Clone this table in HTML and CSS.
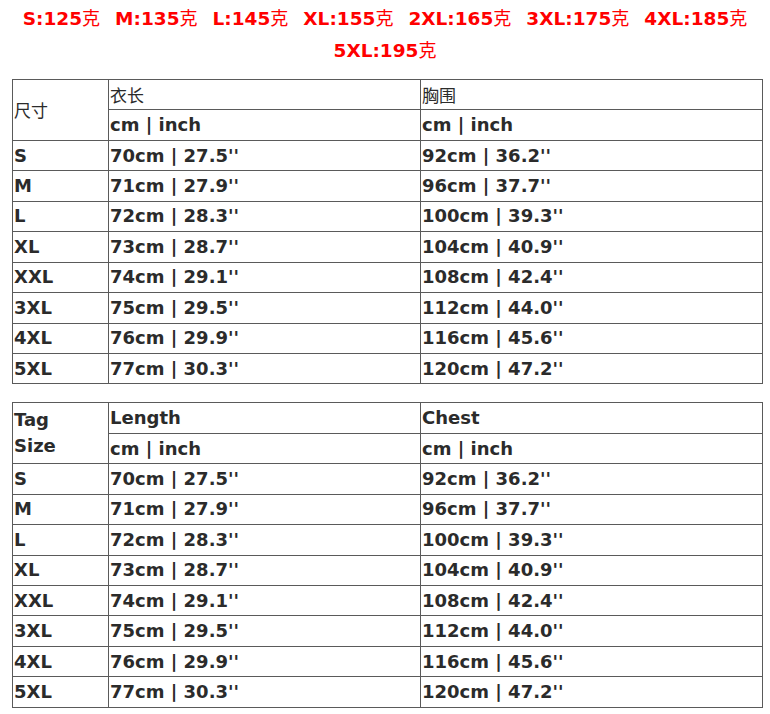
FILE: index.html
```html
<!DOCTYPE html>
<html>
<head>
<meta charset="utf-8">
<link rel="stylesheet" href="styles.css">
</head>
<body>
<div class="title">
  <span class="w">S:125<span class="cn">克</span></span>
  <span class="w">M:135<span class="cn">克</span></span>
  <span class="w">L:145<span class="cn">克</span></span>
  <span class="w">XL:155<span class="cn">克</span></span>
  <span class="w">2XL:165<span class="cn">克</span></span>
  <span class="w">3XL:175<span class="cn">克</span></span>
  <span class="w">4XL:185<span class="cn">克</span></span>
  <span class="w">5XL:195<span class="cn">克</span></span>
</div>
<div class="page">
  <table class="size">
    <colgroup><col class="c1"><col class="c2"><col class="c3"></colgroup>
    <tr><td rowspan="2" class="cn">尺寸</td><td class="cn">衣长</td><td class="cn">胸围</td></tr>
    <tr><td>cm | inch</td><td>cm | inch</td></tr>
    <tr><td>S</td><td>70cm | 27.5''</td><td>92cm | 36.2''</td></tr>
    <tr><td>M</td><td>71cm | 27.9''</td><td>96cm | 37.7''</td></tr>
    <tr><td>L</td><td>72cm | 28.3''</td><td>100cm | 39.3''</td></tr>
    <tr><td>XL</td><td>73cm | 28.7''</td><td>104cm | 40.9''</td></tr>
    <tr><td>XXL</td><td>74cm | 29.1''</td><td>108cm | 42.4''</td></tr>
    <tr><td>3XL</td><td>75cm | 29.5''</td><td>112cm | 44.0''</td></tr>
    <tr><td>4XL</td><td>76cm | 29.9''</td><td>116cm | 45.6''</td></tr>
    <tr><td>5XL</td><td>77cm | 30.3''</td><td>120cm | 47.2''</td></tr>
  </table>

  <table class="size">
    <colgroup><col class="c1"><col class="c2"><col class="c3"></colgroup>
    <tr><td rowspan="2" class="tag">Tag<br>Size</td><td>Length</td><td>Chest</td></tr>
    <tr><td>cm | inch</td><td>cm | inch</td></tr>
    <tr><td>S</td><td>70cm | 27.5''</td><td>92cm | 36.2''</td></tr>
    <tr><td>M</td><td>71cm | 27.9''</td><td>96cm | 37.7''</td></tr>
    <tr><td>L</td><td>72cm | 28.3''</td><td>100cm | 39.3''</td></tr>
    <tr><td>XL</td><td>73cm | 28.7''</td><td>104cm | 40.9''</td></tr>
    <tr><td>XXL</td><td>74cm | 29.1''</td><td>108cm | 42.4''</td></tr>
    <tr><td>3XL</td><td>75cm | 29.5''</td><td>112cm | 44.0''</td></tr>
    <tr><td>4XL</td><td>76cm | 29.9''</td><td>116cm | 45.6''</td></tr>
    <tr><td>5XL</td><td>77cm | 30.3''</td><td>120cm | 47.2''</td></tr>
  </table>
</div>
</body>
</html>
```
FILE: styles.css
```css
html, body {
  margin: 0;
  padding: 0;
  background: #ffffff;
}
body {
  font-family: "DejaVu Sans", Verdana, sans-serif;
}
.title {
  display: flex;
  flex-wrap: wrap;
  justify-content: center;
  column-gap: 15px;
  padding: 2px 0 0 0;
  margin: 0 0 13px 0;
  color: #ff0000;
  font-weight: bold;
  font-size: 18.5px;
  line-height: 31px;
}
.title .w {
  white-space: nowrap;
}
.title .cn {
  font-family: "Noto Sans CJK SC", sans-serif;
  font-weight: normal;
  font-size: 18px;
}
.page {
  padding: 0 9px 0 12px;
}
.size {
  width: 750px;
  border-collapse: collapse;
  table-layout: fixed;
  margin-bottom: 18px;
  color: #2b2b2b;
}
.size .c1 { width: 96px; }
.size .c2 { width: 312px; }
.size .c3 { width: 342px; }
.size td {
  border: 1px solid #5a5a5a;
  height: 29.45px;
  padding: 0 0 0 1px;
  font-size: 18px;
  font-weight: bold;
  line-height: 22px;
  vertical-align: middle;
  white-space: nowrap;
}
.size td.cn {
  font-family: "Noto Sans CJK SC", sans-serif;
  font-weight: normal;
  font-size: 17px;
}
.size td.tag {
  line-height: 26px;
  white-space: normal;
}
```
